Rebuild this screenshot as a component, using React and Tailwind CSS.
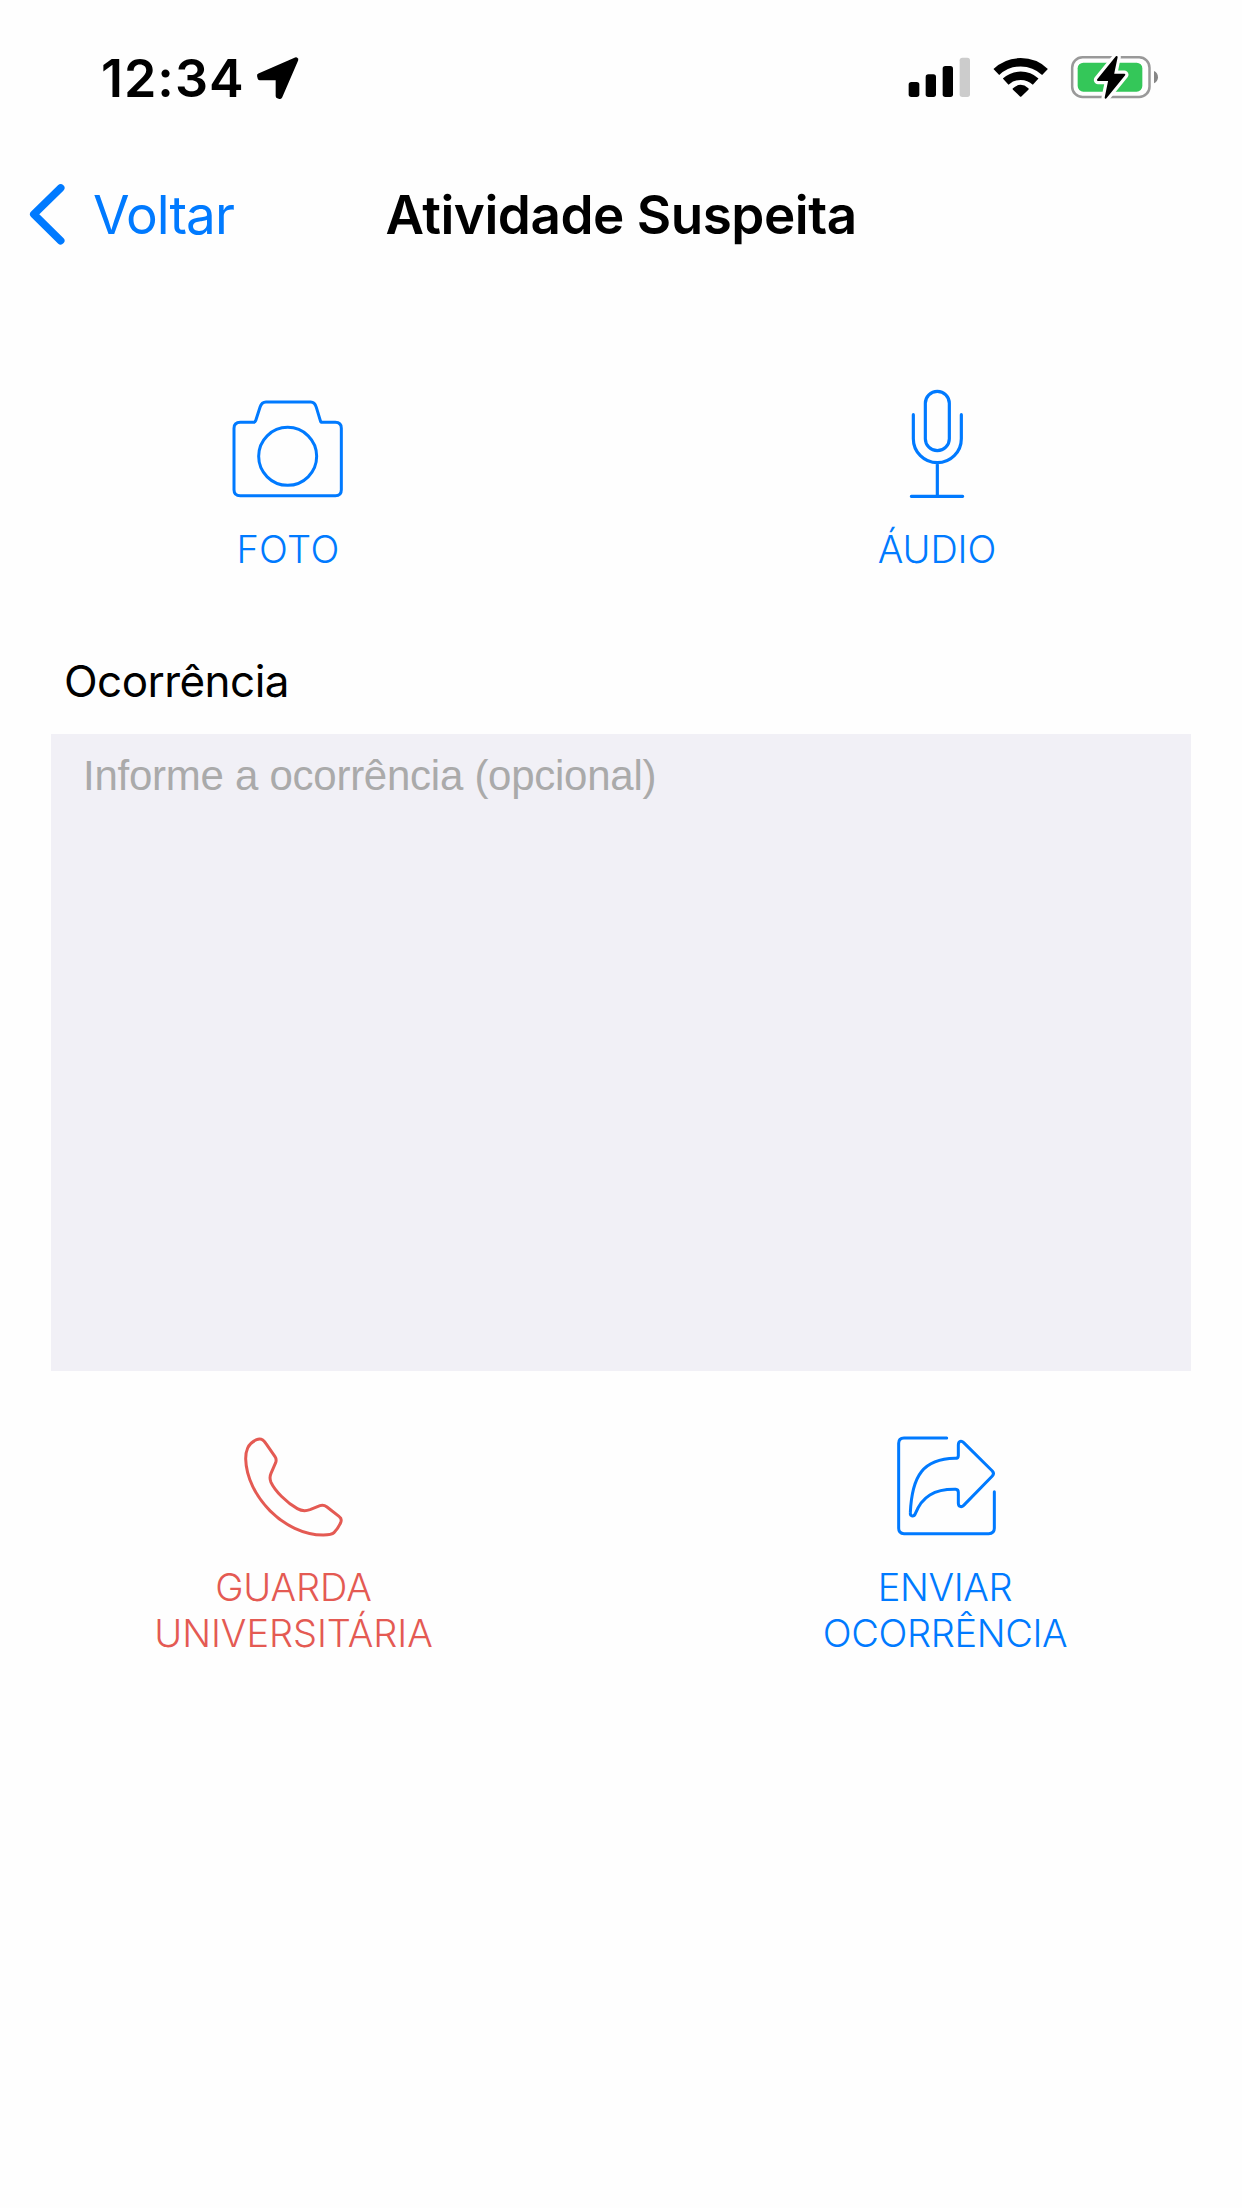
import React from 'react';

const LocationArrow = () => (
  <svg className="ml-2.5 mt-[10px] h-[45px] w-[45px]" viewBox="525 51 135 135">
    <path d="M648 59 L538 107 L540 114 H594 V168 L600 170 Z" fill="#000" stroke="#000" strokeWidth="14" strokeLinejoin="round" />
  </svg>
);

const Signal = () => (
  <svg className="h-[46px] w-[63px]" viewBox="54 45 189 138">
    <rect x="56" y="126" width="32" height="45" rx="8" />
    <rect x="107" y="103" width="31" height="68" rx="8" />
    <rect x="158" y="78" width="31" height="93" rx="8" />
    <rect x="209" y="53" width="31" height="118" rx="8" fill="#cccccc" />
  </svg>
);

const Wifi = () => (
  <svg className="h-[46px] w-[55px]" viewBox="309 45 165 138">
    <g fill="none" stroke="#000" strokeWidth="25">
      <path d="M319 96 A106 106 0 0 1 465 96" />
      <path d="M347 125 A66 66 0 0 1 437 125" />
    </g>
    <path d="M392 167 L371 147 Q392 128 413 147 Z" stroke="#000" strokeWidth="6" strokeLinejoin="round" />
  </svg>
);

const Battery = () => (
  <svg className="h-[46px] w-[89px]" viewBox="540 45 267 138">
    <rect x="546.500" y="52" width="232" height="119" rx="31" fill="none" stroke="#999999" strokeWidth="7.5" />
    <rect x="563" y="68" width="194" height="87" rx="17" fill="#34c759" />
    <path d="M792 93 C808 100 808 123 792 130 Z" fill="#868686" />
    <path d="M680 51 L624 120 H658 L647 173 L703 104 H669 Z" fill="#fff" stroke="#fefefe" strokeWidth="25" strokeLinejoin="round" />
    <path d="M680 51 L624 120 H658 L647 173 L703 104 H669 Z" stroke="#000" strokeWidth="6" strokeLinejoin="round" />
  </svg>
);

const ChevronBack = () => (
  <svg className="h-16 w-[42px] overflow-visible" viewBox="48 72 126 192" fill="none" stroke="currentColor" strokeWidth="23" strokeLinecap="round" strokeLinejoin="round">
    <path d="M152 84 L71.500 163 L152 242" />
  </svg>
);

const Icon = ({ viewBox, strokeWidth, children }) => (
  <svg className="h-[116px] w-[116px]" viewBox={viewBox} fill="none" stroke="currentColor" strokeWidth={strokeWidth} strokeLinecap="round" strokeLinejoin="round">
    {children}
  </svg>
);

const CameraIcon = () => (
  <Icon viewBox="60 18 348 348" strokeWidth="9">
    <path d="M91 127 H131 Q135 127 137 122 L150 82 Q155 66 168 66 H302 Q314 66 319 82 L331 122 Q332 127 337 127 H376 Q394 127 394 145 V329 Q394 347 376 347 H91 Q72 347 72 329 V145 Q72 127 91 127 Z" />
    <circle cx="233" cy="229" r="87" />
  </Icon>
);

const MicIcon = () => (
  <Icon viewBox="57 48 348 348" strokeWidth="9.5">
    <rect x="196" y="64" width="72" height="178" rx="36" />
    <path d="M160 134 V206 A72 72 0 0 0 304 206 V134 M232 278 V379 M154 379 H308" />
  </Icon>
);

const PhoneIcon = () => (
  <Icon viewBox="288 30 348 348" strokeWidth="9">
    <path d="M323 84 C318 95 317 104 317 116 C320 228 432 345 550 345 C566 345 576 344 582 338 C590 330 597 319 602 308 C605 300 604 294 598 290 L561 261 C553 255 548 254 540 257 L510 269 C496 274 486 274 472 266 C440 248 405 213 393 187 C388 175 389 169 393 160 L407 128 C410 120 409 116 405 110 L378 71 C369 57 362 54 350 59 C341 63 328 73 323 84 Z" />
  </Icon>
);

const ShareIcon = () => (
  <Icon viewBox="264 30 348 348" strokeWidth="9">
    <path d="M440 54 H312 Q296 54 296 70 V325 Q296 341 312 341 H566 Q583 341 583 325 V215" />
    <path d="M475 75 C475 63 484 61 491 68 L577 153 Q584 161 577 168 L491 256 C484 263 475 260 475 250 V217 Q475 209 467 208 C402 207 366 230 346 281 C342 291 330 290 331 278 C336 166 370 117 465 115 Q475 115 475 107 Z" />
  </Icon>
);

export default function App() {
  return (
    <main className="h-[2208px] w-[1242px] overflow-hidden bg-[#fefefe] font-['Inter',sans-serif] text-black">
      <header className="flex h-[111px] items-start justify-between pl-[101px] pr-[83px] pt-[47px]">
        <div className="flex">
          <span className="w-36 text-[52px] font-semibold leading-[64px] tracking-[0.99px]">12:34</span>
          <LocationArrow />
        </div>
        <div className="mt-2 flex gap-[22px]">
          <Signal />
          <Wifi />
          <Battery />
        </div>
      </header>

      <nav className="mt-[73px] grid h-16 grid-cols-[1fr_auto_1fr] text-[53px] leading-[62px]">
        <button className="flex items-start pl-[26px] text-[#007aff]">
          <ChevronBack />
          <span className="ml-[25px] tracking-[-0.95px]">Voltar</span>
        </button>
        <h1 className="font-semibold tracking-[-0.48px]">Atividade Suspeita</h1>
      </nav>

      <section className="mt-[138px] flex justify-between pl-[188px] pr-[205px] text-[38px] font-light leading-[46px] text-[#007aff]">
        <button className="flex w-[200px] flex-col items-center gap-6">
          <CameraIcon />
          <span className="tracking-[0.36px]">FOTO</span>
        </button>
        <button className="flex w-[200px] flex-col items-center gap-6">
          <MicIcon />
          <span className="tracking-[-0.1px]">ÁUDIO</span>
        </button>
      </section>

      <section className="mt-[82px]">
        <label htmlFor="ocorrencia" className="block pl-16 text-[44px] leading-[54px] tracking-[-0.55px]">Ocorrência</label>
        <textarea
          id="ocorrencia"
          placeholder="Informe a ocorrência (opcional)"
          className="ml-[51px] mt-[26px] block h-[637px] w-[1140px] resize-none bg-[#f1f0f6] pl-8 pt-[18px] font-['Liberation_Sans',sans-serif] text-[42px] leading-[48px] tracking-[-0.26px] placeholder:text-[#aaaaaa]"
        />
      </section>

      <section className="mt-[59px] flex justify-between pl-[134px] pr-[136px] text-[38px] font-light leading-[46px]">
        <button className="flex w-80 flex-col items-center gap-[18px] text-[#e45a53]">
          <PhoneIcon />
          <span className="mr-px tracking-[-0.06px]">GUARDA<br />UNIVERSITÁRIA</span>
        </button>
        <button className="flex w-80 flex-col items-center gap-[18px] text-[#007aff]">
          <ShareIcon />
          <span className="mr-0.5 tracking-[-0.36px]">ENVIAR<br />OCORRÊNCIA</span>
        </button>
      </section>
    </main>
  );
}
